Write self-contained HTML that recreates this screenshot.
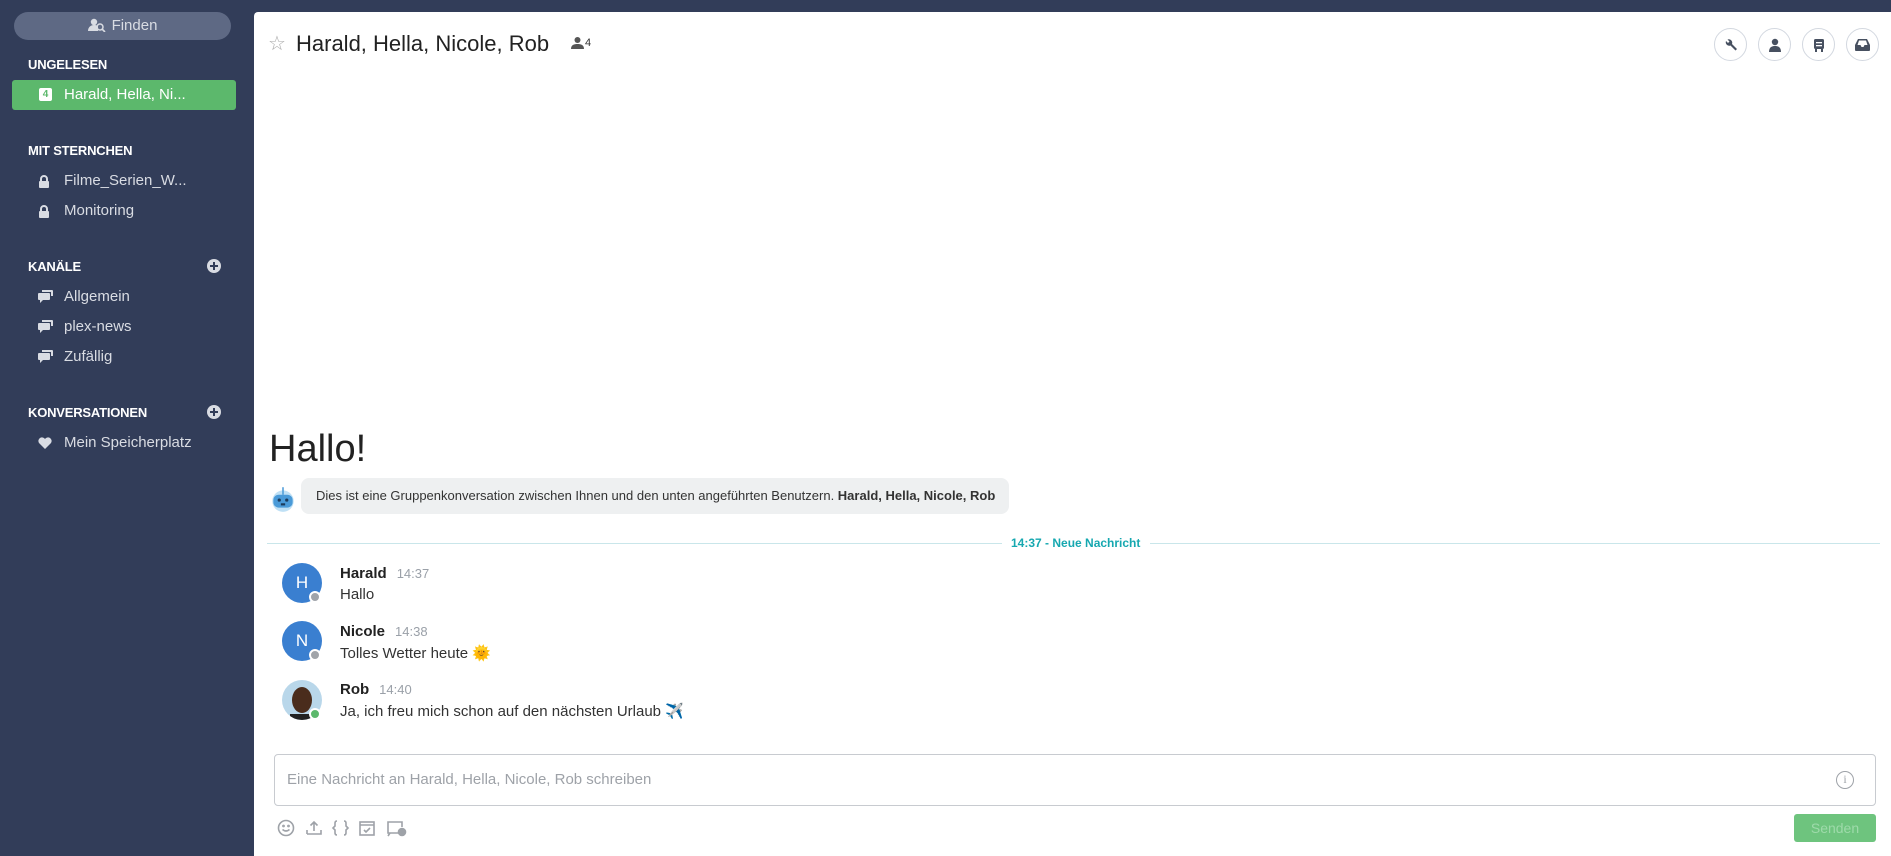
<!DOCTYPE html>
<html><head><meta charset="utf-8"><style>
*{box-sizing:border-box;margin:0;padding:0}
body{width:1891px;height:856px;background:#323d59;font-family:"Liberation Sans",sans-serif;position:relative;overflow:hidden}
.a{position:absolute}
.sec{position:absolute;left:28px;color:#fff;font-size:13px;font-weight:bold;letter-spacing:-0.2px}
.it{position:absolute;left:64px;color:#d9dce3;font-size:15px}
.ic{position:absolute;left:38px}
.plus{position:absolute;left:207px;width:14px;height:14px;border-radius:50%;background:#d9dce3}
.plus:before,.plus:after{content:"";position:absolute;background:#323d59}
.plus:before{left:3px;top:6px;width:8px;height:2px}
.plus:after{left:6px;top:3px;width:2px;height:8px}
.main{position:absolute;left:254px;top:12px;width:1637px;height:844px;background:#fff;border-top-left-radius:4px}
.hb{position:absolute;top:28px;width:33px;height:33px;border:1px solid #d3d8e0;border-radius:50%;display:flex;align-items:center;justify-content:center}
.av{position:absolute;left:282px;width:40px;height:40px;border-radius:50%;background:#3a7fd0;color:#fff;font-size:17px;display:flex;align-items:center;justify-content:center}
.dot{position:absolute;width:12px;height:12px;border-radius:50%;border:2px solid #fff}
.nm{position:absolute;left:340px;font-size:15px;font-weight:bold;color:#222}
.tm{font-weight:normal;color:#9aa0a8;font-size:13px;margin-left:10px}
.tx{position:absolute;left:340px;font-size:15px;color:#333}
</style></head><body>
<div class="a" style="left:14px;top:12px;width:217px;height:28px;border-radius:14px;background:#5e6984;color:#d9dce3;font-size:15px;line-height:28px;text-align:center">
<svg width="18" height="14" viewBox="0 0 18 14" style="vertical-align:-2px;margin-right:6px"><circle cx="6" cy="4" r="3.2" fill="#d9dce3"/><path d="M0 13c0-4 3-6 6-6s4 1 4 2v4z" fill="#d9dce3"/><circle cx="12" cy="9" r="3" fill="none" stroke="#d9dce3" stroke-width="1.5"/><path d="M14 11l3 3" stroke="#d9dce3" stroke-width="1.6"/></svg>Finden</div>
<div class="sec" style="top:57px">UNGELESEN</div>
<div class="a" style="left:12px;top:80px;width:224px;height:30px;background:#5cb86c;border-radius:3px"></div>
<div class="a" style="left:39px;top:88px;width:13px;height:13px;background:#fff;border-radius:2px;font-size:10px;font-weight:bold;color:#5cb86c;text-align:center;line-height:13px">4</div>
<div class="it" style="top:86px;color:#fff">Harald, Hella, Ni...</div>
<div class="sec" style="top:143px">MIT STERNCHEN</div>
<svg class="ic" style="top:175px" width="12" height="13" viewBox="0 0 12 13"><rect x="1" y="6" width="10" height="7" rx="1" fill="#d9dce3"/><path d="M3 6V4a3 3 0 0 1 6 0v2" stroke="#d9dce3" stroke-width="2" fill="none"/></svg>
<div class="it" style="top:172px">Filme_Serien_W...</div>
<svg class="ic" style="top:205px" width="12" height="13" viewBox="0 0 12 13"><rect x="1" y="6" width="10" height="7" rx="1" fill="#d9dce3"/><path d="M3 6V4a3 3 0 0 1 6 0v2" stroke="#d9dce3" stroke-width="2" fill="none"/></svg>
<div class="it" style="top:202px">Monitoring</div>
<div class="sec" style="top:259px">KANÄLE</div><div class="plus" style="top:259px"></div>
<svg class="ic" style="top:290px" width="15" height="13" viewBox="0 0 15 13"><path d="M4 0h10a1 1 0 0 1 1 1v5h-2V2H4z" fill="#d9dce3"/><path d="M1 3h10a1 1 0 0 1 1 1v5a1 1 0 0 1-1 1H5l-3 3v-3H1a1 1 0 0 1-1-1V4a1 1 0 0 1 1-1z" fill="#d9dce3"/></svg>
<div class="it" style="top:288px">Allgemein</div>
<svg class="ic" style="top:320px" width="15" height="13" viewBox="0 0 15 13"><path d="M4 0h10a1 1 0 0 1 1 1v5h-2V2H4z" fill="#d9dce3"/><path d="M1 3h10a1 1 0 0 1 1 1v5a1 1 0 0 1-1 1H5l-3 3v-3H1a1 1 0 0 1-1-1V4a1 1 0 0 1 1-1z" fill="#d9dce3"/></svg>
<div class="it" style="top:318px">plex-news</div>
<svg class="ic" style="top:350px" width="15" height="13" viewBox="0 0 15 13"><path d="M4 0h10a1 1 0 0 1 1 1v5h-2V2H4z" fill="#d9dce3"/><path d="M1 3h10a1 1 0 0 1 1 1v5a1 1 0 0 1-1 1H5l-3 3v-3H1a1 1 0 0 1-1-1V4a1 1 0 0 1 1-1z" fill="#d9dce3"/></svg>
<div class="it" style="top:348px">Zufällig</div>
<div class="sec" style="top:405px">KONVERSATIONEN</div><div class="plus" style="top:405px"></div>
<svg class="ic" style="top:437px" width="14" height="12" viewBox="0 0 14 12"><path d="M7 12L1 6a3.3 3.3 0 0 1 6-4 3.3 3.3 0 0 1 6 4z" fill="#d9dce3"/></svg>
<div class="it" style="top:434px">Mein Speicherplatz</div>

<div class="main"></div>
<div class="a" style="left:268px;top:31px;font-size:20px;color:#aaa">☆</div>
<div class="a" style="left:296px;top:31px;font-size:22px;color:#222">Harald, Hella, Nicole, Rob</div>
<svg class="a" style="left:571px;top:37px" width="13" height="12" viewBox="0 0 13 12"><circle cx="6.5" cy="3" r="3" fill="#555"/><path d="M0 12c0-4 3-5 6.5-5S13 8 13 12z" fill="#555"/></svg>
<div class="a" style="left:585px;top:37px;font-size:11px;color:#333">4</div>
<div class="hb" style="left:1714px"><svg width="14" height="14" viewBox="0 0 14 14"><path d="M2 3a3.5 3.5 0 0 0 4.5 4.5l5 5 1.5-1.5-5-5A3.5 3.5 0 0 0 3.5 1.5L5.5 3.5 4 5z" fill="#475060"/></svg></div>
<div class="hb" style="left:1758px"><svg width="14" height="14" viewBox="0 0 14 14"><circle cx="7" cy="4" r="3.2" fill="#475060"/><path d="M1 14c0-5 3-6 6-6s6 1 6 6z" fill="#475060"/></svg></div>
<div class="hb" style="left:1802px"><svg width="14" height="14" viewBox="0 0 14 14"><rect x="2" y="1" width="10" height="10" rx="1.5" fill="#475060"/><rect x="3" y="11" width="2" height="3" fill="#475060"/><rect x="9" y="11" width="2" height="3" fill="#475060"/><rect x="4" y="4" width="6" height="1.3" fill="#fff"/><rect x="4" y="7" width="6" height="1.3" fill="#fff"/></svg></div>
<div class="hb" style="left:1846px"><svg width="15" height="13" viewBox="0 0 15 13"><path d="M3 1h9l3 6v5a1 1 0 0 1-1 1H1a1 1 0 0 1-1-1V7z" fill="#475060"/><path d="M2.5 7h3l1 2h2l1-2h3L11 2.5H4z" fill="#fff"/></svg></div>

<div class="a" style="left:269px;top:428px;font-size:38px;color:#222">Hallo!</div>
<svg class="a" style="left:270px;top:484px" width="26" height="30" viewBox="0 0 20 28"><circle cx="10" cy="16" r="10" fill="#bfe0f5"/><rect x="1" y="10" width="18" height="12" rx="5" fill="#4a9ad8"/><circle cx="6.5" cy="15" r="1.5" fill="#1b3a5a"/><circle cx="13.5" cy="15" r="1.5" fill="#1b3a5a"/><rect x="8" y="18" width="4" height="2" fill="#1b3a5a"/><rect x="9.3" y="3" width="1.4" height="7" fill="#4a9ad8"/></svg>
<div class="a" style="left:301px;top:478px;width:708px;height:36px;background:#eef0f1;border-radius:8px;font-size:13px;color:#333;line-height:36px;padding-left:15px;white-space:nowrap">Dies ist eine Gruppenkonversation zwischen Ihnen und den unten angeführten Benutzern. <b>Harald, Hella, Nicole, Rob</b></div>
<div class="a" style="left:267px;top:543px;width:735px;height:1px;background:#c9e6ea"></div>
<div class="a" style="left:1150px;top:543px;width:730px;height:1px;background:#c9e6ea"></div>
<div class="a" style="left:1011px;top:536px;font-size:12px;font-weight:bold;color:#16a8b0">14:37 - Neue Nachricht</div>

<div class="av" style="top:563px">H</div><div class="dot" style="left:309px;top:591px;background:#a0a4aa"></div>
<div class="nm" style="top:565px">Harald<span class="tm">14:37</span></div>
<div class="tx" style="top:586px">Hallo</div>
<div class="av" style="top:621px">N</div><div class="dot" style="left:309px;top:649px;background:#a0a4aa"></div>
<div class="nm" style="top:623px">Nicole<span class="tm">14:38</span></div>
<div class="tx" style="top:644px">Tolles Wetter heute <span style="color:#f5c518">🌞</span></div>
<div class="av" style="top:680px;background:#b9d7ea;overflow:hidden"><svg width="40" height="40"><ellipse cx="20" cy="20" rx="10" ry="13" fill="#4a2c1c"/><rect x="8" y="34" width="24" height="8" fill="#222"/></svg></div><div class="dot" style="left:309px;top:708px;background:#5cb86c"></div>
<div class="nm" style="top:681px">Rob<span class="tm">14:40</span></div>
<div class="tx" style="top:702px">Ja, ich freu mich schon auf den nächsten Urlaub ✈️</div>

<div class="a" style="left:274px;top:754px;width:1602px;height:52px;border:1px solid #c8cbd0;border-radius:4px"></div>
<div class="a" style="left:287px;top:771px;font-size:15px;color:#9ea2a8">Eine Nachricht an Harald, Hella, Nicole, Rob schreiben</div>
<div class="a" style="left:1836px;top:771px;width:18px;height:18px;border:1.5px solid #9ea2a8;border-radius:50%;color:#9ea2a8;font-size:12px;text-align:center;line-height:15px;font-family:'Liberation Serif',serif">i</div>
<svg class="a" style="left:277px;top:819px" width="135" height="18" viewBox="0 0 135 18" fill="none" stroke="#9ea2a8" stroke-width="1.6"><circle cx="9" cy="9" r="7.5"/><circle cx="6.5" cy="7" r=".6"/><circle cx="11.5" cy="7" r=".6"/><path d="M5.5 10.5q3.5 3 7 0"/><path d="M30 15h14v-4M30 11v4M37 12V3M33.5 6.5L37 3l3.5 3.5"/><path d="M60 2q-2 0-2 2v3l-2 2 2 2v3q0 2 2 2M67 2q2 0 2 2v3l2 2-2 2v3q0 2-2 2"/><rect x="83" y="3" width="14" height="13"/><path d="M83 6h14M87 11l2 2 4-4"/><path d="M122 14h-11V3h14v5M113 14l-2 3"/><circle cx="125" cy="13" r="3.5" fill="#9ea2a8"/></svg>
<div class="a" style="left:1794px;top:814px;width:82px;height:28px;background:#6ec47e;border-radius:3px;color:#9edaaa;font-size:14px;text-align:center;line-height:28px">Senden</div>
</body></html>
